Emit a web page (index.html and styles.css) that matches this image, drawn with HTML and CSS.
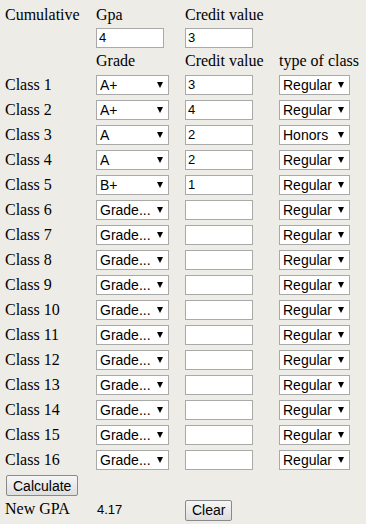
FILE: index.html
```html
<!DOCTYPE html>
<html>
  <head>
    <title>GPA Calculator</title>
    <link rel="stylesheet" href="styles.css">
  </head>
  <body>
    <div class="page">
      <div class="sheet">
        <!-- current standing -->
        <div class="label">Cumulative</div>
        <div class="label">Gpa</div>
        <div class="label">Credit value</div>
        <div></div>

        <div></div>
        <div><input class="field" type="text" value="4"></div>
        <div><input class="field" type="text" value="3"></div>
        <div></div>

        <div></div>
        <div class="label">Grade</div>
        <div class="label">Credit value</div>
        <div class="label">type of class</div>
      </div>
      <div class="sheet" id="classes"></div>
      <div class="sheet footer">
        <div><button class="btn calc">Calculate</button></div>
        <div></div>
        <div></div>
        <div></div>

        <div class="label">New GPA</div>
        <div class="result" id="newGpa">4.17</div>
        <div><button class="btn">Clear</button></div>
        <div></div>
      </div>
    </div>

    <script>
      const filled = [
        ["A+", "3", "Regular"],
        ["A+", "4", "Regular"],
        ["A", "2", "Honors"],
        ["A", "2", "Regular"],
        ["B+", "1", "Regular"]
      ];
      const grades = ["Grade...", "A+", "A", "A-", "B+", "B", "B-", "C+", "C", "C-", "D", "F"];
      const types = ["Regular", "Honors", "AP"];

      function makeSelect(options, chosen, cls) {
        let html = '<span class="pick ' + cls + '"><select>';
        options.forEach(function (o) {
          html += "<option" + (o === chosen ? " selected" : "") + ">" + o + "</option>";
        });
        return html + "</select></span>";
      }

      const box = document.getElementById("classes");
      let rows = "";
      for (let i = 1; i <= 16; i++) {
        const row = filled[i - 1] || ["Grade...", "", "Regular"];
        rows += '<div class="label">Class ' + i + "</div>";
        rows += "<div>" + makeSelect(grades, row[0], "grade") + "</div>";
        rows += '<div><input class="field" type="text" value="' + row[1] + '"></div>';
        rows += "<div>" + makeSelect(types, row[2], "kind") + "</div>";
      }
      box.innerHTML = rows;
    </script>
  </body>
</html>
```

FILE: styles.css
```css
body {
  margin: 0;
  background-color: #ffffff;
}

.page {
  width: 361px;
  height: 521px;
  padding: 3px 0 0 5px;
  background-color: #eeece6;
  font-family: "Liberation Serif", "Times New Roman", serif;
  font-size: 16px;
  color: #000;
}

.sheet {
  display: grid;
  grid-template-columns: 91px 89px 94px 1fr;
  grid-auto-rows: 23px;
  align-items: center;
}

#classes {
  grid-auto-rows: 25px;
}

.footer {
  grid-template-rows: 25px 24px;
}

.label {
  line-height: 18px;
  white-space: nowrap;
}

.field {
  box-sizing: border-box;
  width: 68px;
  height: 20px;
  margin: 0;
  padding: 0 2px;
  border: 1px solid #a9a9a9;
  background: #fff;
  font-family: "Liberation Sans", Arial, sans-serif;
  font-size: 13px;
  color: #000;
  display: block;
}

.pick {
  position: relative;
  display: block;
}

.pick select {
  box-sizing: border-box;
  display: block;
  height: 20px;
  margin: 0;
  padding: 0 0 0 3px;
  border: 1px solid #a9a9a9;
  border-radius: 0;
  background: #fff;
  -webkit-appearance: none;
  appearance: none;
  font-family: "Liberation Sans", Arial, sans-serif;
  font-size: 14px;
  color: #000;
}

.grade select {
  width: 73px;
}

.kind select {
  width: 71px;
}

.pick::after {
  content: "";
  position: absolute;
  top: 7px;
  border-left: 3px solid transparent;
  border-right: 3px solid transparent;
  border-top: 6px solid #000;
  pointer-events: none;
}

.grade::after {
  left: 61px;
}

.kind::after {
  left: 59px;
}

.btn {
  display: block;
  height: 21px;
  margin: 0;
  padding: 0 6px;
  border: 1px solid #8a8a8a;
  border-radius: 2px;
  background: linear-gradient(#f6f6f6, #dedede);
  font-family: "Liberation Sans", Arial, sans-serif;
  font-size: 14px;
  color: #000;
}

.calc {
  margin-left: 1px;
}

.footer .btn {
  margin-top: 2px;
}

.result {
  font-family: "Liberation Sans", Arial, sans-serif;
  font-size: 13px;
  padding-left: 1px;
}
```
